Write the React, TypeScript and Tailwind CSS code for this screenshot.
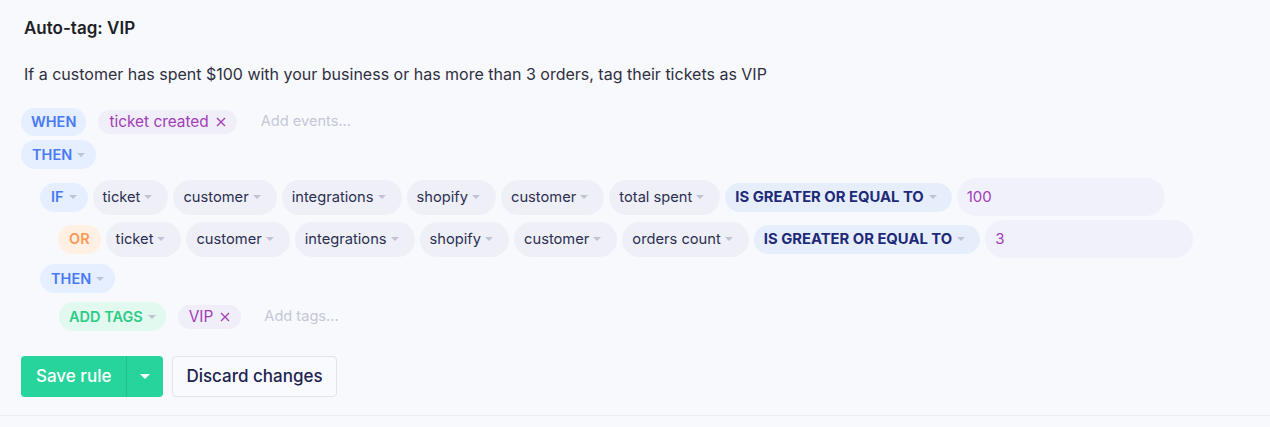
import React from 'react';

const font = { fontFamily: 'Inter, "Noto Sans", sans-serif' };

function Caret({ className = 'ml-[5px]' }: { className?: string }) {
  return (
    <svg width="8" height="4" viewBox="0 0 8 4" className={`text-[#bfc3d4] ${className}`}>
      <path d="M0 0h8L4 4z" fill="currentColor" />
    </svg>
  );
}

function Cross() {
  return (
    <svg width="10" height="10" viewBox="0 0 10 10" className="ml-[7px]">
      <path d="M1 1l8 8M9 1l-8 8" stroke="currentColor" strokeWidth="1.3" />
    </svg>
  );
}

function Field({ label }: { label: string }) {
  return (
    <div className="flex h-[35px] items-center rounded-full bg-[#efeff8] pl-[10px] pr-[16px] text-[14.7px] text-[#2c2f52]">
      {label}
      <Caret className="ml-[4px]" />
    </div>
  );
}

function Keyword({ label, caret = true, tone = 'blue' }: { label: string; caret?: boolean; tone?: 'blue' | 'orange' | 'green' | 'navy' }) {
  const tones = {
    blue: 'bg-[#e5efff] text-[#4a7af5] font-semibold text-[14.5px] px-[11px]',
    orange: 'bg-[#fff0e3] text-[#fb9a52] font-semibold text-[14.5px] px-[11px]',
    green: 'bg-[#e1f9ee] text-[#2ccb87] font-semibold text-[14.5px] px-[10px]',
    navy: 'bg-[#e7eefb] text-[#1e2a78] font-bold text-[14.8px] pl-[10px] pr-[15px]',
  };
  return (
    <div className={`flex h-[29px] items-center rounded-full ${tones[tone]}`}>
      {label}
      {caret && <Caret />}
    </div>
  );
}

function Tag({ label }: { label: string }) {
  return (
    <div className="flex h-[24px] items-center rounded-full bg-[#f0eef8] px-[11px] text-[15.4px] text-[#a23db6]">
      {label}
      <Cross />
    </div>
  );
}

function Value({ value }: { value: string }) {
  return (
    <div className="flex h-[38px] w-[208px] items-center rounded-full bg-[#f1f1fc] pl-[10px] text-[15px] text-[#a23db6]">
      {value}
    </div>
  );
}

function Condition({ lead, tone, path, value }: { lead: string; tone: 'blue' | 'orange'; path: string[]; value: string }) {
  return (
    <div className="flex items-center gap-[5px]">
      <Keyword label={lead} tone={tone} caret={tone === 'blue'} />
      {path.map((p, i) => (
        <Field key={i} label={p} />
      ))}
      <Keyword label="IS GREATER OR EQUAL TO" tone="navy" />
      <Value value={value} />
    </div>
  );
}

export default function App() {
  return (
    <div style={font} className="min-h-screen bg-[#f8f9fd]">
      <div className="pl-[21px] pt-[16px]">
        <h1 className="pl-[3px] text-[17px] font-semibold leading-6 text-[#1d1e26]">Auto-tag: VIP</h1>
        <p className="mt-[24px] pl-[3px] text-[16px] leading-5 text-[#2e3040]">
          If a customer has spent $100 with your business or has more than 3 orders, tag their tickets as VIP
        </p>

        <div className="mt-[24px] flex h-[28px] items-center">
          <div className="flex h-[28px] items-center rounded-full bg-[#e5efff] px-[10px] text-[14.5px] font-semibold text-[#4a7af5]">
            WHEN
          </div>
          <div className="ml-[12px]">
            <Tag label="ticket created" />
          </div>
          <span className="ml-[24px] text-[14.6px] text-[#c4c7d6]">Add events...</span>
        </div>
        <div className="mt-[4px] flex">
          <Keyword label="THEN" />
        </div>

        <div className="mt-[9px] pl-[19px]">
          <Condition
            lead="IF"
            tone="blue"
            path={['ticket', 'customer', 'integrations', 'shopify', 'customer', 'total spent']}
            value="100"
          />
        </div>
        <div className="mt-[4px] pl-[37px]">
          <Condition
            lead="OR"
            tone="orange"
            path={['ticket', 'customer', 'integrations', 'shopify', 'customer', 'orders count']}
            value="3"
          />
        </div>
        <div className="mt-[6px] flex pl-[19px]">
          <Keyword label="THEN" />
        </div>
        <div className="mt-[9px] flex items-center pl-[38px]">
          <Keyword label="ADD TAGS" tone="green" caret />
          <div className="ml-[12px]">
            <Tag label="VIP" />
          </div>
          <span className="ml-[23px] text-[14.6px] text-[#c4c7d6]">Add tags...</span>
        </div>

        <div className="mt-[25px] flex items-center gap-[9px]">
          <div className="flex h-[41px] overflow-hidden rounded-[4px] bg-[#27d49b] text-white">
            <button className="px-[15px] text-[17px] font-medium">Save rule</button>
            <div className="flex w-[37px] items-center justify-center border-l border-[#22c08b]">
              <svg width="10" height="5" viewBox="0 0 10 5">
                <path d="M0 0h10L5 5z" fill="white" />
              </svg>
            </div>
          </div>
          <button className="h-[41px] rounded-[4px] border border-[#e2e4ec] bg-[#f9fafd] px-[13px] text-[17px] font-medium text-[#1d2350]">
            Discard changes
          </button>
        </div>
      </div>
      <div className="mt-[18px] border-t border-[#eceef4]" />
    </div>
  );
}
